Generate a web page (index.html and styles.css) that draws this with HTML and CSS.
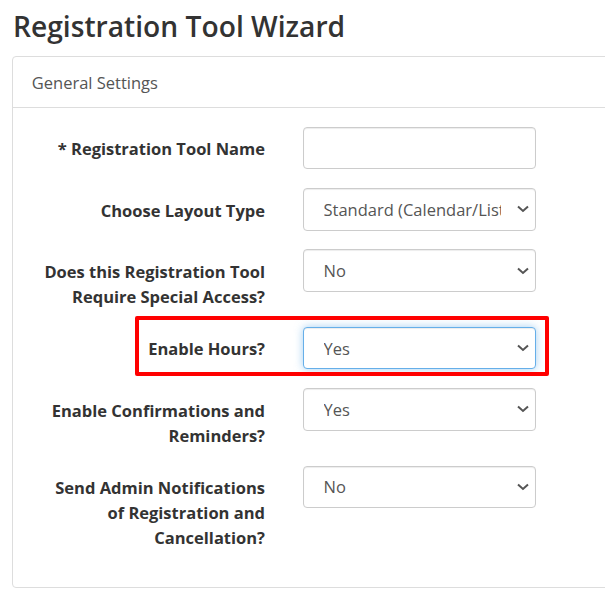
FILE: index.html
```html
<!DOCTYPE html>
<html>
<head>
<meta charset="utf-8">
<title>Registration Tool Wizard</title>
<link rel="stylesheet" href="styles.css">
</head>
<body>
<h3 class="page-title">Registration Tool Wizard</h3>
<div class="panel">
  <div class="panel-heading">General Settings</div>
  <div class="panel-body">
    <form class="form">
      <div class="form-row">
        <label class="form-label" for="name">* Registration Tool Name</label>
        <input class="form-control" id="name" type="text">
      </div>
      <div class="form-row">
        <label class="form-label" for="layout">Choose Layout Type</label>
        <select class="form-control form-select" id="layout"><option>Standard (Calendar/List)</option></select>
      </div>
      <div class="form-row">
        <label class="form-label" for="access">Does this Registration Tool Require Special Access?</label>
        <select class="form-control form-select" id="access"><option>No</option></select>
      </div>
      <div class="form-row highlighted">
        <label class="form-label" for="hours">Enable Hours?</label>
        <select class="form-control form-select is-focused" id="hours"><option>Yes</option></select>
      </div>
      <div class="form-row">
        <label class="form-label" for="confirm">Enable Confirmations and Reminders?</label>
        <select class="form-control form-select" id="confirm"><option>Yes</option></select>
      </div>
      <div class="form-row">
        <label class="form-label" for="notify">Send Admin Notifications of Registration and Cancellation?</label>
        <select class="form-control form-select" id="notify"><option>No</option></select>
      </div>
    </form>
  </div>
</div>
</body>
</html>
```
FILE: styles.css
```css
html, body {
  margin: 0;
  padding: 0;
  background: #fff;
  overflow: hidden;
}
body {
  font-family: "Open Sans", "Noto Sans", sans-serif;
  color: #333;
  font-size: 16.5px;
  line-height: 25px;
}
.page-title {
  margin: 10px 0 13px 13px;
  font-size: 28.2px;
  font-weight: 600;
  line-height: 33px;
  color: #333;
  white-space: nowrap;
}
.panel {
  margin-left: 12px;
  margin-right: -30px;
  border: 1px solid #ddd;
  border-radius: 4px;
  background: #fff;
}
.panel-heading {
  padding: 12.5px 18.75px;
  border-bottom: 1px solid #ddd;
  color: #555;
  font-size: 16.5px;
  line-height: 25px;
}
.panel-body {
  padding: 18.75px;
}
.form {
  margin: 0;
}
.form-row {
  display: grid;
  grid-template-columns: 233.25px 233px;
  column-gap: 37.5px;
  align-items: start;
  margin-bottom: 18.75px;
}
.form-label {
  padding-top: 9.5px;
  margin-bottom: -0.75px;
  padding-left: 8px;
  text-align: right;
  font-weight: 700;
  color: #333;
  font-size: 16.5px;
  line-height: 25px;
}
.form-control {
  box-sizing: border-box;
  display: block;
  width: 233px;
  height: 42.5px;
  margin: 0;
  padding: 7.5px 15px;
  border: 1px solid #ccc;
  border-radius: 4px;
  background-color: #fff;
  box-shadow: inset 0 1px 1px rgba(0, 0, 0, .075);
  font-family: inherit;
  font-size: 16.5px;
  color: #555;
  outline: none;
}
.form-select {
  -webkit-appearance: none;
  appearance: none;
  padding-left: 20px;
  padding-right: 34px;
  background-image: url("data:image/svg+xml;utf8,<svg xmlns='http://www.w3.org/2000/svg' width='12' height='8' viewBox='0 0 12 8'><path d='M1 1.5 L6 6 L11 1.5' fill='none' stroke='%23555' stroke-width='2'/></svg>");
  background-repeat: no-repeat;
  background-position: right 6px center;
  background-size: 12px 8px;
  text-overflow: clip;
  white-space: nowrap;
}
.is-focused {
  border-color: #66afe9;
  box-shadow: inset 0 1px 1px rgba(0, 0, 0, .075), 0 0 8px rgba(102, 175, 233, .6);
}
.highlighted {
  position: relative;
}
.highlighted::after {
  content: "";
  position: absolute;
  left: 103.25px;
  top: -10.75px;
  width: 414px;
  height: 60px;
  box-sizing: border-box;
  border: 4px solid #f00;
  border-radius: 2px;
  pointer-events: none;
}
```
